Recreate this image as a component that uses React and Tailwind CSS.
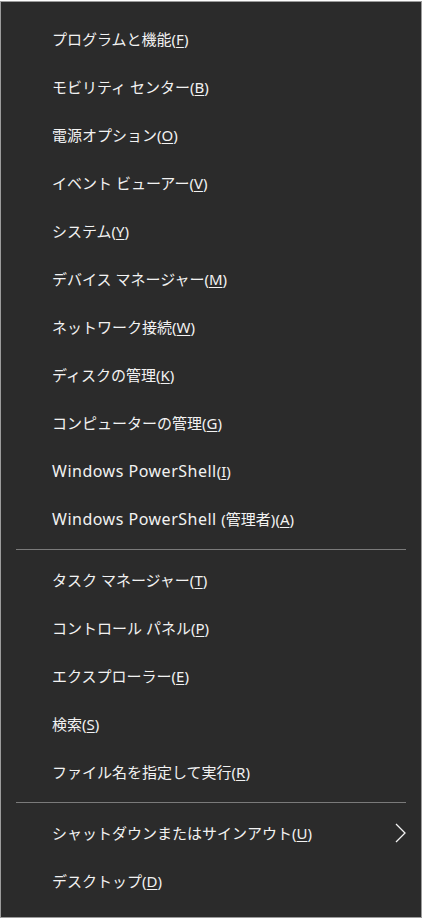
import React from 'react';

const groups = [
    [
        ["プログラムと機能", "F"],
        ["モビリティ センター", "B"],
        ["電源オプション", "O"],
        ["イベント ビューアー", "V"],
        ["システム", "Y"],
        ["デバイス マネージャー", "M"],
        ["ネットワーク接続", "W"],
        ["ディスクの管理", "K"],
        ["コンピューターの管理", "G"],
        ["Windows PowerShell", "I"],
        ["Windows PowerShell (管理者)", "A"],
    ],
    [
        ["タスク マネージャー", "T"],
        ["コントロール パネル", "P"],
        ["エクスプローラー", "E"],
        ["検索", "S"],
        ["ファイル名を指定して実行", "R"],
    ],
    [
        ["シャットダウンまたはサインアウト", "U", true],
        ["デスクトップ", "D"],
    ],
];

// latin runs render a bit bigger than the japanese ones in the original
const renderLabel = (label) =>
    label.split(/([A-Za-z]+(?: [A-Za-z]+)* ?)/).map((part, i) =>
        /^[A-Za-z]/.test(part) ? (
            <span key={i} className="text-[16px] tracking-[0.5px]">{part}</span>
        ) : (
            part
        )
    );

const MenuItem = ({ label, accessKey, submenu }) => (
    <div className="h-[48px] flex items-center pl-[51px] pr-[14px] justify-between">
        <span className="whitespace-pre">
            {renderLabel(label)}(<span className="underline underline-offset-2">{accessKey}</span>)
        </span>
        {submenu && (
            <svg width="12" height="20" viewBox="0 0 12 20">
                <path d="M1 1 L10 10 L1 19" fill="none" stroke="#f2f2f2" strokeWidth="1.3" />
            </svg>
        )}
    </div>
);

export default function App() {
    return (
        <div className="w-[423px] h-[919px] bg-white pt-[1px]">
            <div
                className="w-[422px] h-[917px] bg-[#2b2b2b] border border-[#9c9c9c] text-[#f2f2f2] text-[15px] pt-[13px]"
                style={{ fontFamily: '"Noto Sans", "Noto Sans CJK JP", sans-serif' }}
            >
                {groups.map((items, gi) => (
                    <div key={gi}>
                        {gi > 0 && (
                            <div className="py-[6px] px-[15px]">
                                <div className="h-px bg-[#7a7a7a]" />
                            </div>
                        )}
                        {items.map(([label, key, submenu]) => (
                            <MenuItem key={label} label={label} accessKey={key} submenu={submenu} />
                        ))}
                    </div>
                ))}
            </div>
        </div>
    );
}
